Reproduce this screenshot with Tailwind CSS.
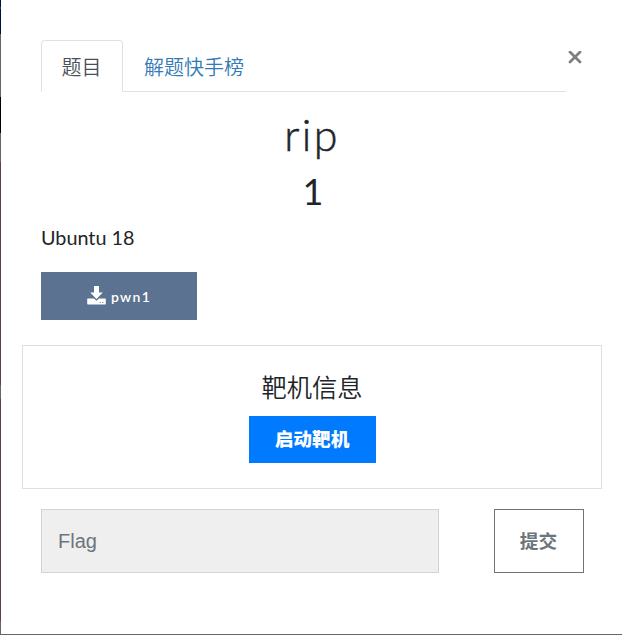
<!DOCTYPE html>
<html lang="zh-CN">
<head>
<meta charset="utf-8">
<title>rip</title>
<script src="https://cdn.jsdelivr.net/npm/@tailwindcss/browser@4"></script>
</head>
<body class="h-[635px] w-[622px] overflow-hidden bg-[#666] font-[Lato,'Noto_Sans_CJK_SC',sans-serif] text-[#212529]">
<div class="flex h-full">
  <div class="flex w-px shrink-0 flex-col">
    <i class="h-[7px] bg-[#00103c]"></i><i class="h-[2px] bg-[#33436c]"></i><i class="h-[25px] bg-[#00103c]"></i>
    <i class="h-[63px] bg-[#666]"></i><i class="h-[36px] bg-black"></i><i class="h-[29px] bg-[#666]"></i>
    <i class="h-[223px] bg-[#643c4c]"></i><i class="h-[14px] bg-[#666]"></i><i class="h-[222px] bg-[#643c4c]"></i><i class="h-[14px] bg-[#666]"></i>
  </div>
  <main class="flex h-[634px] w-[621px] flex-col bg-white pt-10">
    <header class="flex h-[52px] pl-10">
      <nav class="flex w-[525px] border-b border-[#dee2e6] font-['Noto_Sans_CJK_SC',sans-serif] text-[20px] font-[350]">
        <a class="-mb-px flex h-[52px] w-[82px] items-center justify-center rounded-t border border-b-white border-[#dee2e6] bg-white pt-[2px] pr-px text-[#495057]">题目</a>
        <a class="flex h-[52px] items-center pt-[2px] pl-[21px] text-[#337ab7]">解题快手榜</a>
      </nav>
      <button class="ml-0.5 mt-[11px] h-[14px] w-[14px]" aria-label="Close">
        <svg class="block" width="14" height="14" viewBox="0 0 14 14"><path d="M2 1 12 11M12 1 2 11" stroke="#7f7f7f" stroke-width="2.8" stroke-linecap="round"/></svg>
      </button>
    </header>
    <h1 class="mt-[16px] h-[54px] pl-px text-center text-[43px] leading-[54px] font-light tracking-[2.4px] [-webkit-text-stroke:0.5px_#212529]">rip</h1>
    <h2 class="mt-[7px] h-[46px] pl-[3px] text-center text-[36px] leading-[45px]">1</h2>
    <p class="mt-[7px] pl-10 text-[19.8px] leading-[30px]">Ubuntu 18</p>
    <a class="mt-[20px] ml-10 flex h-12 w-[156px] shrink-0 items-center justify-center gap-[5px] bg-[#5b7290] text-[14px] font-semibold tracking-[1.3px] text-white">
      <svg class="-mt-[2px]" width="19" height="19" viewBox="0 0 19 19" fill="#fff"><path d="M7 0h5V6.5h3.8L9.5 13 3.2 6.5H7z"/><path fill-rule="evenodd" d="M.8 12.5H7l2.5 2.3 2.5-2.3h6.2q.6 0 .6.6v4.7q0 .7-.7.7H.9q-.7 0-.7-.7v-4.7q0-.6.6-.6ZM12.7 16v1h1v-1Zm2.6 0v1h1v-1Z"/></svg>
      <span>pwn1</span>
    </a>
    <section class="mt-[25px] ml-[21px] flex h-[144px] w-[580px] shrink-0 flex-col items-center border border-[#dfdfdf]">
      <h3 class="mt-[21px] h-[39px] font-['Noto_Sans_CJK_SC',sans-serif] text-[25.3px] leading-[38px] font-[350]">靶机信息</h3>
      <button class="mt-[10px] ml-px h-[47px] w-[127px] bg-[#007bff] pr-px text-[18.7px] font-black text-white">启动靶机</button>
    </section>
    <form class="mt-5 flex h-16 justify-between pr-[38px] pl-10">
      <input class="h-16 w-[398px] border border-[#ced4da] bg-[#efefef] px-4 font-['Liberation_Sans',sans-serif] text-[20px] placeholder:text-[#6c757d]" placeholder="Flag">
      <button type="button" class="h-16 w-[90px] border border-[#6c757d] pt-px pr-px text-[18.7px] font-bold text-[#6c757d]">提交</button>
    </form>
  </main>
</div>
</body>
</html>
